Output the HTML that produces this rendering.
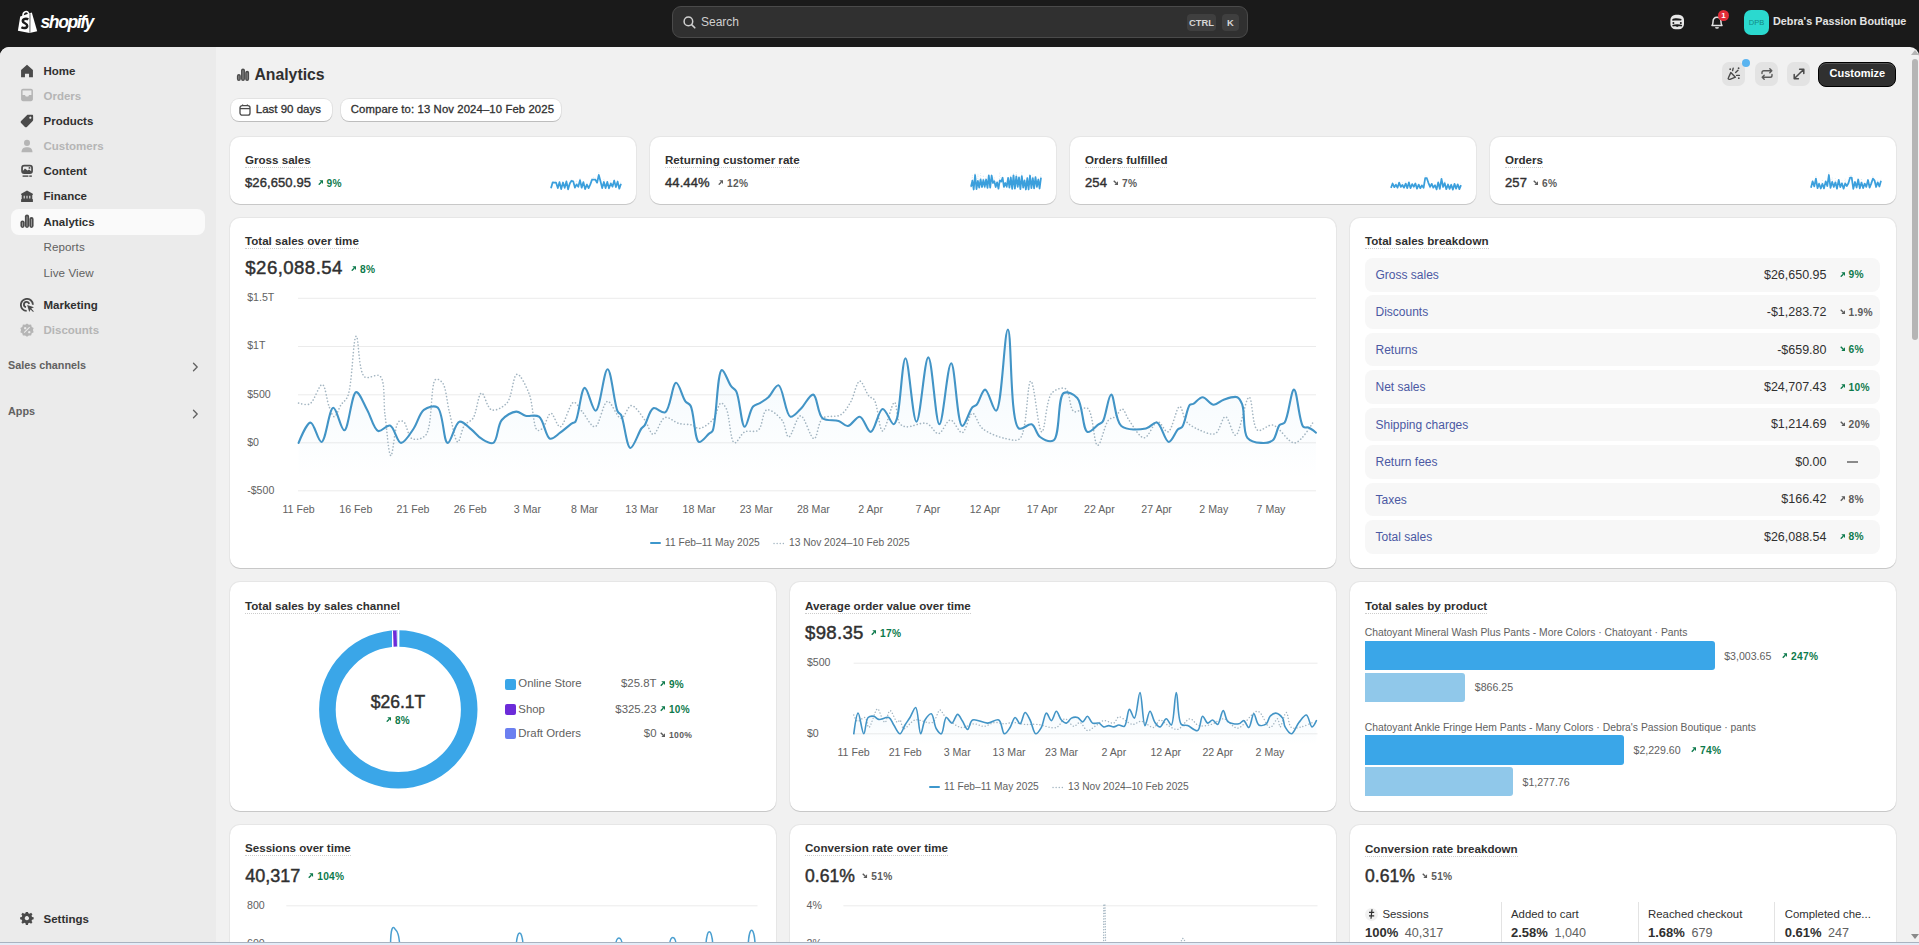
<!DOCTYPE html><html><head><meta charset="utf-8"><style>
html,body{margin:0;padding:0;}
body{width:1919px;height:945px;overflow:hidden;position:relative;background:#1a1a1a;font-family:"Liberation Sans",sans-serif;}
.t{position:absolute;white-space:nowrap;line-height:1.2;}
.abs{position:absolute;}
#top{position:absolute;left:0;top:0;width:1919px;height:47px;background:#1a1a1a;}
#frame{position:absolute;left:0;top:47px;width:1919px;height:898px;background:#f1f1f1;border-radius:9px 9px 0 0;}
#side{position:absolute;left:0;top:47px;width:216px;height:898px;background:#ebebeb;border-radius:9px 0 0 0;}
#search{position:absolute;left:672px;top:6px;width:576px;height:32px;box-sizing:border-box;border:1px solid #4a4a4a;border-radius:9px;background:#303030;}
.kbd{position:absolute;top:7px;height:17px;border-radius:4px;background:#3f3f3f;color:#d6d6d6;font:700 9.4px/17px "Liberation Sans",sans-serif;text-align:center;}
.btn{position:absolute;background:#fff;border-radius:8px;box-shadow:0 1px 0 rgba(0,0,0,0.16),0 0 0 1px rgba(0,0,0,0.06);}
.card{position:absolute;background:#fff;border-radius:10px;box-shadow:0 1px 0 rgba(0,0,0,0.13),0 0 0 1px rgba(0,0,0,0.045);}
.ttl{font-size:11.6px;font-weight:700;color:#303030;border-bottom:1px dotted #cccccc;padding-bottom:0.2px;}
.pct{display:flex;align-items:flex-start;gap:3.6px;font-weight:700;letter-spacing:0.3px;}
.pct svg{display:block;margin-top:2.3px;width:5.4px;height:5.4px;}
</style></head><body><div id="top"></div>
<svg style="position:absolute;left:0;top:0" width="40" height="40" viewBox="0 0 40 40">
<path d="M23 16 C22.6 11.4 27.4 9.6 29 14.4" stroke="#fff" stroke-width="1.5" fill="none"/>
<path d="M20.2 16.4 L31.8 12.6 L37.2 31.2 L29.6 33 L17.9 30.8 Z" fill="#fff"/>
<path d="M30 13.4 L29.9 32.8" stroke="#1a1a1a" stroke-width="0.7"/>
<path d="M28.2 19.6 C26.6 18.4 22.6 18.6 22.8 21.2 C23 23.4 27.4 23.2 27.2 25.8 C27 28.4 23.4 28.4 21.4 27.2" stroke="#1a1a1a" stroke-width="2.5" fill="none"/>
</svg>
<div class="t" style="left:40.5px;top:11.8px;font-size:17.6px;font-weight:700;font-style:italic;color:#fff;letter-spacing:-1.45px">shopify</div>
<div id="search"><svg style="position:absolute;left:10px;top:9px" width="13" height="13" viewBox="0 0 13 13"><circle cx="5.4" cy="5.4" r="4.3" stroke="#d0d0d0" stroke-width="1.5" fill="none"/><path d="M8.6 8.6 L11.8 11.8" stroke="#d0d0d0" stroke-width="1.6" stroke-linecap="round"/></svg><div class="t" style="left:28px;top:8px;font-size:12px;color:#cfcfcf">Search</div><div class="kbd" style="left:514px;width:29px">CTRL</div><div class="kbd" style="left:549px;width:17px">K</div></div>
<svg style="position:absolute;left:1669px;top:14px" width="16" height="16" viewBox="0 0 16 16">
<rect x="1.4" y="0.8" width="13.6" height="14.4" rx="5.2" fill="#e8e8e8"/>
<path d="M3.2 5.4 C5 4.2 8 4 12.6 5 L12.2 6.6 C9 6.2 6 6.4 3.4 6.8 Z" fill="#1a1a1a"/>
<circle cx="4.4" cy="9" r="1" fill="#1a1a1a"/><circle cx="11.8" cy="9" r="1" fill="#1a1a1a"/>
<path d="M3.2 11 C5 10.4 6.4 10.2 8.2 10.2 C10 10.2 11.4 10.4 13.2 11 L12.6 12.6 C11 12.2 10 12.2 9.2 12.4 L8.2 13 L7.2 12.4 C6.4 12.2 5.4 12.2 3.8 12.6 Z" fill="#1a1a1a"/>
</svg>
<svg style="position:absolute;left:1709px;top:14px" width="16" height="16" viewBox="0 0 16 16">
<path d="M3 11.5 C3.8 10.6 4 9.6 4 8 C4 5 5.6 3.2 8 3.2 C10.4 3.2 12 5 12 8 C12 9.6 12.2 10.6 13 11.5 Z" fill="none" stroke="#e3e3e3" stroke-width="1.5" stroke-linejoin="round"/>
<path d="M6.6 13.2 C7 14.2 9 14.2 9.4 13.2" stroke="#e3e3e3" stroke-width="1.5" fill="none"/>
</svg>
<div style="position:absolute;left:1718px;top:10px;width:11px;height:11px;border-radius:50%;background:#e22c38;color:#fff;font:700 8px/11px 'Liberation Sans',sans-serif;text-align:center">1</div>
<div style="position:absolute;left:1744px;top:10px;width:25px;height:25px;border-radius:7px;background:#2bd9cf;color:#128a84;font:400 7.5px/25px 'Liberation Sans',sans-serif;text-align:center">DPB</div>
<div class="t" style="left:1773px;top:15.0px;font-size:10.8px;font-weight:700;color:#e3e3e3;">Debra's Passion Boutique</div>
<div id="frame"></div><div id="side"></div>
<div style="position:absolute;left:0;top:942px;width:1919px;height:1px;background:#a9b3c0"></div><div style="position:absolute;left:0;top:943px;width:1919px;height:2px;background:#e4ecf7"></div>
<div style="position:absolute;left:1912px;top:59px;width:6px;height:281px;border-radius:3px;background:#b5b5b5"></div>
<svg style="position:absolute;left:1911px;top:50px" width="8" height="5"><path d="M0 5 L4 0 L8 5 Z" fill="#b5b5b5"/></svg>
<svg style="position:absolute;left:1911px;top:934px" width="8" height="5"><path d="M0 0 L4 5 L8 0 Z" fill="#8a8a8a"/></svg>
<div style="position:absolute;left:11px;top:209px;width:194px;height:26px;border-radius:8px;background:#fafafa"></div>
<svg style="position:absolute;left:20px;top:64px;color:#4a4a4a" width="14" height="14" viewBox="0 0 13 13" fill="#4a4a4a"><path d="M6.5 0.8 L12 5.6 V12.2 H8.4 V9 H4.6 V12.2 H1 V5.6 Z" /></svg>
<div class="t" style="left:43.5px;top:64.6px;font-size:11.5px;font-weight:700;color:#303030;">Home</div>
<svg style="position:absolute;left:20px;top:88px;color:#b5b5b5" width="14" height="14" viewBox="0 0 13 13" fill="#b5b5b5"><path d="M1 2.6 C1 1.6 1.8 0.8 2.8 0.8 H10.2 C11.2 0.8 12 1.6 12 2.6 V10.4 C12 11.4 11.2 12.2 10.2 12.2 H2.8 C1.8 12.2 1 11.4 1 10.4 Z M2.4 6.6 H4.6 L5.4 8 H7.6 L8.4 6.6 H10.6 V2.4 H2.4 Z" fill-rule="evenodd"/></svg>
<div class="t" style="left:43.5px;top:89.5px;font-size:11.5px;font-weight:700;color:#b5b5b5;">Orders</div>
<svg style="position:absolute;left:20px;top:114px;color:#4a4a4a" width="14" height="14" viewBox="0 0 13 13" fill="#4a4a4a"><path d="M7.4 0.8 H11.2 C11.8 0.8 12.2 1.2 12.2 1.8 V5.6 C12.2 6 12 6.3 11.8 6.6 L6.4 12 C5.9 12.5 5.1 12.5 4.6 12 L1 8.4 C0.5 7.9 0.5 7.1 1 6.6 L6.4 1.2 C6.7 0.9 7 0.8 7.4 0.8 Z M9.6 2.4 A1 1 0 1 0 9.61 2.4 Z" fill-rule="evenodd"/></svg>
<div class="t" style="left:43.5px;top:114.5px;font-size:11.5px;font-weight:700;color:#303030;">Products</div>
<svg style="position:absolute;left:20px;top:139px;color:#b5b5b5" width="14" height="14" viewBox="0 0 13 13" fill="#b5b5b5"><circle cx="6.5" cy="3.6" r="2.8"/><path d="M1.4 12.2 C1.4 8.8 3.6 7.6 6.5 7.6 C9.4 7.6 11.6 8.8 11.6 12.2 Z"/></svg>
<div class="t" style="left:43.5px;top:139.6px;font-size:11.5px;font-weight:700;color:#b5b5b5;">Customers</div>
<svg style="position:absolute;left:20px;top:164px;color:#4a4a4a" width="14" height="14" viewBox="0 0 13 13" fill="#4a4a4a"><rect x="1.9" y="1.5" width="9.3" height="6.9" rx="2" fill="none" stroke="currentColor" stroke-width="1.6"/><path d="M2 7.2 L4.6 4.2 L7 6 L8.4 5.2 L11 7.2 V8.4 H2 Z"/><circle cx="8.8" cy="3.6" r="0.9"/><rect x="2.4" y="10.6" width="5.4" height="1.3"/><rect x="8.6" y="10.6" width="2.4" height="1.3"/></svg>
<div class="t" style="left:43.5px;top:165.0px;font-size:11.5px;font-weight:700;color:#303030;">Content</div>
<svg style="position:absolute;left:20px;top:189px;color:#4a4a4a" width="14" height="14" viewBox="0 0 13 13" fill="#4a4a4a"><path d="M6.5 1.4 L11.9 4.4 V5.6 H1.1 V4.4 Z"/><path d="M1.6 5.4 H11.4 V9.4 H1.6 Z M3.4 6.2 V8.8 H4.4 V6.2 Z M6 6.2 V8.8 H7 V6.2 Z M8.6 6.2 V8.8 H9.6 V6.2 Z" fill-rule="evenodd"/><rect x="1" y="9.2" width="11" height="2.8" rx="0.5"/></svg>
<div class="t" style="left:43.5px;top:190.2px;font-size:11.5px;font-weight:700;color:#303030;">Finance</div>
<svg style="position:absolute;left:20px;top:214px;color:#4a4a4a" width="14" height="14" viewBox="0 0 13 13" fill="#4a4a4a"><rect x="0.4" y="6" width="3.9" height="6.9" rx="1.95"/><rect x="4.55" y="0.4" width="3.9" height="12.5" rx="1.95"/><rect x="8.7" y="2.8" width="3.9" height="10.1" rx="1.95"/><path d="M2.35 8 V11.2 M6.5 2.6 V11.2 M10.65 5 V11.2" stroke="#9a9a9a" stroke-width="0.9" stroke-linecap="round"/></svg>
<div class="t" style="left:43.5px;top:215.5px;font-size:11.5px;font-weight:700;color:#303030;">Analytics</div>
<div class="t" style="left:43.5px;top:240.3px;font-size:11.6px;font-weight:400;color:#616161;letter-spacing:0.1px">Reports</div>
<div class="t" style="left:43.5px;top:265.6px;font-size:11.6px;font-weight:400;color:#616161;letter-spacing:0.1px">Live View</div>
<svg style="position:absolute;left:20px;top:298px;color:#4a4a4a" width="14" height="14" viewBox="0 0 13 13" fill="#4a4a4a"><path d="M12 6.2 A5.6 5.6 0 1 0 6.2 12" fill="none" stroke="currentColor" stroke-width="1.7"/><path d="M8.4 5.6 A2.4 2.4 0 1 0 5.6 8.4" fill="none" stroke="currentColor" stroke-width="1.7"/><path d="M6.6 6.6 L13 8.6 L10.4 9.8 L12.8 12.4 L12.2 13 L9.8 10.6 L8.6 13 Z"/></svg>
<div class="t" style="left:43.5px;top:299.0px;font-size:11.5px;font-weight:700;color:#303030;">Marketing</div>
<svg style="position:absolute;left:20px;top:323px;color:#b5b5b5" width="14" height="14" viewBox="0 0 13 13" fill="#b5b5b5"><path d="M6.5 0.4 L8.2 1.7 L10.3 1.5 L10.9 3.6 L12.7 4.7 L12 6.6 L12.7 8.5 L10.9 9.6 L10.3 11.6 L8.2 11.5 L6.5 12.8 L4.8 11.5 L2.7 11.6 L2.1 9.6 L0.3 8.5 L1 6.6 L0.3 4.7 L2.1 3.6 L2.7 1.5 L4.8 1.7 Z M4.2 9.3 L9.3 4.2 L8.6 3.5 L3.5 8.6 Z M4.8 3.6 A1.1 1.1 0 1 0 4.81 3.6 Z M8.6 7.4 A1.1 1.1 0 1 0 8.61 7.4 Z" fill-rule="evenodd"/></svg>
<div class="t" style="left:43.5px;top:323.7px;font-size:11.5px;font-weight:700;color:#b5b5b5;">Discounts</div>
<div class="t" style="left:8px;top:358.8px;font-size:10.8px;font-weight:700;color:#616161;">Sales channels</div>
<div class="t" style="left:8px;top:405.0px;font-size:10.8px;font-weight:700;color:#616161;">Apps</div>
<svg style="position:absolute;left:192px;top:362px" width="7" height="10" viewBox="0 0 7 10"><path d="M1.5 1.2 L5.2 5 L1.5 8.8" stroke="#616161" stroke-width="1.3" fill="none" stroke-linecap="round" stroke-linejoin="round"/></svg>
<svg style="position:absolute;left:192px;top:409px" width="7" height="10" viewBox="0 0 7 10"><path d="M1.5 1.2 L5.2 5 L1.5 8.8" stroke="#616161" stroke-width="1.3" fill="none" stroke-linecap="round" stroke-linejoin="round"/></svg>
<svg style="position:absolute;left:20px;top:912px;color:#4a4a4a" width="14" height="14" viewBox="0 0 13 13" fill="#4a4a4a"><path d="M5.4 0.6 H7.6 L8 2.4 L9.4 3 L11 2 L12.5 3.6 L11.5 5.1 L12.1 6.5 L13.8 6.9 V9 L12.1 9.4 L11.5 10.8 L12.5 12.3 L11 13.8 L9.4 12.8 L8 13.4 L7.6 15.2 H5.4 L5 13.4 L3.6 12.8 L2 13.8 L0.5 12.3 L1.5 10.8 L0.9 9.4 L-0.8 9 V6.9 L0.9 6.5 L1.5 5.1 L0.5 3.6 L2 2 L3.6 3 L5 2.4 Z M6.5 5.6 A2.3 2.3 0 1 0 6.51 5.6 Z" fill-rule="evenodd" transform="translate(0.8 -1) scale(0.86)"/></svg>
<div class="t" style="left:43.5px;top:912.7px;font-size:11.5px;font-weight:700;color:#303030;">Settings</div>
<svg style="position:absolute;left:236px;top:68px" width="14" height="13" viewBox="0 0 13 13" fill="#4a4a4a"><rect x="0.4" y="6" width="3.9" height="6.9" rx="1.95"/><rect x="4.55" y="0.4" width="3.9" height="12.5" rx="1.95"/><rect x="8.7" y="2.8" width="3.9" height="10.1" rx="1.95"/><path d="M2.35 8 V11.2 M6.5 2.6 V11.2 M10.65 5 V11.2" stroke="#9a9a9a" stroke-width="0.9" stroke-linecap="round"/></svg>
<div class="t" style="left:254.4px;top:66.3px;font-size:15.8px;font-weight:700;color:#303030;">Analytics</div>
<div class="btn" style="left:231px;top:99px;width:101px;height:22px"></div>
<svg style="position:absolute;left:239px;top:103.5px" width="12" height="12" viewBox="0 0 12 12"><rect x="1" y="1.6" width="10" height="9.6" rx="2.2" fill="none" stroke="#4a4a4a" stroke-width="1.3"/><path d="M1 4.6 H11" stroke="#4a4a4a" stroke-width="1.3"/><path d="M3.6 0.4 V2 M8.4 0.4 V2" stroke="#4a4a4a" stroke-width="1.2"/></svg>
<div class="t" style="left:255.8px;top:102.6px;font-size:11.5px;font-weight:400;color:#303030;-webkit-text-stroke:0.3px #303030">Last 90 days</div>
<div class="btn" style="left:341px;top:99px;width:220px;height:22px"></div>
<div class="t" style="left:350.8px;top:102.7px;font-size:11.3px;font-weight:400;color:#303030;letter-spacing:0.12px;-webkit-text-stroke:0.3px #303030">Compare to: 13 Nov 2024–10 Feb 2025</div>
<div style="position:absolute;left:1722px;top:62px;width:23px;height:24px;border-radius:7px;background:#e3e3e3"></div>
<div style="position:absolute;left:1755px;top:62px;width:23px;height:24px;border-radius:7px;background:#e3e3e3"></div>
<div style="position:absolute;left:1787px;top:62px;width:23px;height:24px;border-radius:7px;background:#e3e3e3"></div>
<svg style="position:absolute;left:1727px;top:67px" width="14" height="14" viewBox="0 0 14 14">
<path d="M2.2 12.4 C1.4 12.4 1 11.6 1.3 11 L3.8 5.6 L8.4 10.2 L3 12.4 Z" fill="none" stroke="#4a4a4a" stroke-width="1.4" stroke-linejoin="round"/>
<path d="M5.6 3.6 L6.2 1.2 M8.6 5.4 L11 3.2 M9.6 8.4 L12.4 8.4" stroke="#4a4a4a" stroke-width="1.4" stroke-linecap="round"/>
<circle cx="3.2" cy="2.2" r="0.9" fill="#4a4a4a"/><circle cx="11.6" cy="1.2" r="0.9" fill="#4a4a4a"/><circle cx="11.8" cy="11.2" r="0.9" fill="#4a4a4a"/>
</svg>
<div style="position:absolute;left:1741.5px;top:58.5px;width:8px;height:8px;border-radius:50%;background:#5ab4f0"></div>
<svg style="position:absolute;left:1759.5px;top:67px" width="14" height="14" viewBox="0 0 14 14">
<path d="M2 6.6 V5.6 C2 4.6 2.8 3.8 3.8 3.8 H11.6 M9.8 1.8 L11.8 3.8 L9.8 5.8" fill="none" stroke="#5a5a5a" stroke-width="1.4" stroke-linecap="round" stroke-linejoin="round"/>
<path d="M12 7.4 V8.4 C12 9.4 11.2 10.2 10.2 10.2 H2.4 M4.2 12.2 L2.2 10.2 L4.2 8.2" fill="none" stroke="#5a5a5a" stroke-width="1.4" stroke-linecap="round" stroke-linejoin="round"/>
</svg>
<svg style="position:absolute;left:1791.5px;top:67px" width="14" height="14" viewBox="0 0 14 14">
<path d="M2.2 11.8 L11.8 2.2 M7.6 2.2 H11.8 V6.4 M2.2 7.6 V11.8 H6.4" fill="none" stroke="#4a4a4a" stroke-width="1.5" stroke-linecap="round" stroke-linejoin="round"/>
</svg>
<div style="position:absolute;left:1818px;top:62px;width:78px;height:25px;box-sizing:border-box;border-radius:8px;background:#303030;border:1px solid #000;box-shadow:inset 0 1px 0 rgba(255,255,255,0.18)"></div>
<div class="t" style="left:1829.5px;top:67.2px;font-size:11px;font-weight:700;color:#ffffff;">Customize</div>
<div class="card" style="left:230px;top:137px;width:406px;height:67px"></div>
<div class="t ttl" style="left:245px;top:152.6px">Gross sales</div>
<div class="t" style="left:245px;top:175.4px;font-size:13px;font-weight:400;color:#303030;-webkit-text-stroke:0.4px #303030;letter-spacing:0.1px">$26,650.95</div>
<div class="t pct" style="left:317.5px;top:177.6px;font-size:10.2px;color:#0d7a4c"><svg width="6" height="6" viewBox="0 0 10 10"><path d="M1.4 8.6 L6 4" stroke="currentColor" stroke-width="2.6" fill="none"/><path d="M2.4 0.6 H9.4 V7.6 Z" fill="currentColor"/></svg><span>9%</span></div>
<svg class="abs" style="left:0;top:0" width="1919" height="945"><path d="M551.0,186.7 L552.7,182.6 L554.4,181.2 L556.1,181.2 L557.8,188.2 L559.5,180.6 L561.2,189.0 L563.0,182.6 L564.7,188.1 L566.4,182.5 L568.1,187.2 L569.8,181.6 L571.5,179.0 L573.2,182.2 L574.9,188.8 L576.6,180.1 L578.3,186.4 L580.0,178.2 L581.7,186.8 L583.4,182.1 L585.1,186.9 L586.9,182.4 L588.6,187.6 L590.3,181.6 L592.0,177.6 L593.7,177.6 L595.4,177.6 L597.1,183.1 L598.8,172.0 L600.5,182.5 L602.2,188.8 L603.9,178.9 L605.6,186.3 L607.3,183.5 L609.0,189.5 L610.8,180.5 L612.5,186.3 L614.2,179.2 L615.9,187.2 L617.6,180.0 L619.3,187.9 L621.0,181.2" stroke="#c9d9e6" stroke-width="0.8" stroke-dasharray="0.8 1.6" fill="none" opacity="0.7"/><path d="M551.0,188.3 L552.7,182.3 L554.4,182.6 L556.1,182.7 L557.8,188.1 L559.5,182.2 L561.2,189.1 L563.0,182.5 L564.7,187.8 L566.4,181.4 L568.1,189.3 L569.8,183.4 L571.5,180.8 L573.2,181.3 L574.9,187.6 L576.6,184.5 L578.3,186.7 L580.0,180.1 L581.7,187.7 L583.4,182.1 L585.1,189.1 L586.9,184.6 L588.6,188.1 L590.3,184.4 L592.0,179.7 L593.7,179.7 L595.4,179.7 L597.1,182.7 L598.8,175.0 L600.5,181.2 L602.2,188.1 L603.9,182.0 L605.6,188.1 L607.3,181.9 L609.0,188.3 L610.8,183.5 L612.5,186.7 L614.2,180.6 L615.9,187.1 L617.6,181.7 L619.3,188.7 L621.0,183.7" stroke="#3b9fdc" stroke-width="1.75" fill="none" stroke-linejoin="round"/></svg>
<div class="card" style="left:650px;top:137px;width:406px;height:67px"></div>
<div class="t ttl" style="left:665px;top:152.6px">Returning customer rate</div>
<div class="t" style="left:665px;top:175.4px;font-size:13px;font-weight:400;color:#303030;-webkit-text-stroke:0.4px #303030;letter-spacing:0.1px">44.44%</div>
<div class="t pct" style="left:718px;top:177.6px;font-size:10.2px;color:#5c5c5c"><svg width="6" height="6" viewBox="0 0 10 10"><path d="M1.4 8.6 L6 4" stroke="currentColor" stroke-width="2.6" fill="none"/><path d="M2.4 0.6 H9.4 V7.6 Z" fill="currentColor"/></svg><span>12%</span></div>
<svg class="abs" style="left:0;top:0" width="1919" height="945"><path d="M971.0,187.8 L972.4,175.2 L973.7,188.5 L975.1,172.6 L976.5,187.0 L977.9,173.9 L979.2,188.0 L980.6,173.3 L982.0,187.0 L983.4,175.2 L984.7,189.2 L986.1,176.4 L987.5,186.2 L988.8,175.5 L990.2,188.3 L991.6,174.9 L993.0,181.7 L994.3,177.3 L995.7,186.9 L997.1,180.8 L998.5,188.2 L999.8,172.2 L1001.2,179.9 L1002.6,176.3 L1003.9,189.3 L1005.3,181.7 L1006.7,187.9 L1008.1,177.7 L1009.4,186.3 L1010.8,175.0 L1012.2,187.7 L1013.5,173.1 L1014.9,188.2 L1016.3,172.2 L1017.7,187.2 L1019.0,176.9 L1020.4,188.0 L1021.8,172.3 L1023.2,187.5 L1024.5,179.8 L1025.9,186.6 L1027.3,176.6 L1028.6,188.5 L1030.0,176.1 L1031.4,188.9 L1032.8,174.6 L1034.1,187.4 L1035.5,176.3 L1036.9,187.9 L1038.3,177.3 L1039.6,187.2 L1041.0,173.3" stroke="#c9d9e6" stroke-width="0.8" stroke-dasharray="0.8 1.6" fill="none" opacity="0.7"/><path d="M971.0,186.8 L972.4,180.6 L973.7,189.5 L975.1,175.0 L976.5,189.1 L977.9,180.8 L979.2,187.7 L980.6,179.3 L982.0,187.0 L983.4,180.0 L984.7,186.8 L986.1,179.5 L987.5,187.8 L988.8,175.4 L990.2,187.6 L991.6,175.5 L993.0,183.0 L994.3,181.3 L995.7,187.0 L997.1,182.3 L998.5,188.7 L999.8,180.3 L1001.2,181.6 L1002.6,177.7 L1003.9,186.9 L1005.3,183.0 L1006.7,186.8 L1008.1,177.8 L1009.4,187.6 L1010.8,177.5 L1012.2,188.8 L1013.5,175.3 L1014.9,188.7 L1016.3,176.4 L1017.7,186.8 L1019.0,177.3 L1020.4,189.2 L1021.8,176.1 L1023.2,187.7 L1024.5,180.4 L1025.9,189.5 L1027.3,178.1 L1028.6,189.5 L1030.0,175.5 L1031.4,188.1 L1032.8,178.2 L1034.1,188.4 L1035.5,177.2 L1036.9,186.9 L1038.3,179.6 L1039.6,188.5 L1041.0,177.7" stroke="#3b9fdc" stroke-width="1.75" fill="none" stroke-linejoin="round"/></svg>
<div class="card" style="left:1070px;top:137px;width:406px;height:67px"></div>
<div class="t ttl" style="left:1085px;top:152.6px">Orders fulfilled</div>
<div class="t" style="left:1085px;top:175.4px;font-size:13px;font-weight:400;color:#303030;-webkit-text-stroke:0.4px #303030;letter-spacing:0.1px">254</div>
<div class="t pct" style="left:1113px;top:177.6px;font-size:10.2px;color:#5c5c5c"><svg width="6" height="6" viewBox="0 0 10 10"><path d="M1.4 1.4 L6 6" stroke="currentColor" stroke-width="2.6" fill="none"/><path d="M9.4 2.4 V9.4 H2.4 Z" fill="currentColor"/></svg><span>7%</span></div>
<svg class="abs" style="left:0;top:0" width="1919" height="945"><path d="M1391.0,187.9 L1392.6,182.8 L1394.3,186.9 L1395.9,181.6 L1397.5,188.4 L1399.1,182.6 L1400.8,187.4 L1402.4,182.0 L1404.0,186.3 L1405.7,181.8 L1407.3,186.5 L1408.9,182.1 L1410.5,188.7 L1412.2,183.6 L1413.8,189.6 L1415.4,182.8 L1417.0,189.0 L1418.7,183.6 L1420.3,189.1 L1421.9,184.7 L1423.6,186.9 L1425.2,175.9 L1426.8,175.9 L1428.4,181.2 L1430.1,188.6 L1431.7,182.5 L1433.3,189.1 L1435.0,184.3 L1436.6,187.1 L1438.2,184.4 L1439.8,186.1 L1441.5,176.6 L1443.1,186.5 L1444.7,180.9 L1446.3,189.3 L1448.0,183.2 L1449.6,187.9 L1451.2,183.8 L1452.9,188.7 L1454.5,183.2 L1456.1,187.9 L1457.7,183.7 L1459.4,187.5 L1461.0,182.6" stroke="#c9d9e6" stroke-width="0.8" stroke-dasharray="0.8 1.6" fill="none" opacity="0.7"/><path d="M1391.0,187.9 L1392.6,183.5 L1394.3,187.2 L1395.9,184.7 L1397.5,187.7 L1399.1,182.7 L1400.8,186.9 L1402.4,185.0 L1404.0,187.7 L1405.7,183.6 L1407.3,188.1 L1408.9,182.4 L1410.5,188.1 L1412.2,184.1 L1413.8,186.8 L1415.4,183.5 L1417.0,188.7 L1418.7,184.6 L1420.3,188.2 L1421.9,185.4 L1423.6,187.8 L1425.2,178.2 L1426.8,178.2 L1428.4,182.8 L1430.1,186.9 L1431.7,183.8 L1433.3,187.6 L1435.0,185.2 L1436.6,189.4 L1438.2,182.4 L1439.8,188.8 L1441.5,178.8 L1443.1,187.0 L1444.7,183.1 L1446.3,189.2 L1448.0,184.5 L1449.6,188.9 L1451.2,184.7 L1452.9,189.6 L1454.5,183.9 L1456.1,188.7 L1457.7,184.3 L1459.4,189.1 L1461.0,185.2" stroke="#3b9fdc" stroke-width="1.75" fill="none" stroke-linejoin="round"/></svg>
<div class="card" style="left:1490px;top:137px;width:406px;height:67px"></div>
<div class="t ttl" style="left:1505px;top:152.6px">Orders</div>
<div class="t" style="left:1505px;top:175.4px;font-size:13px;font-weight:400;color:#303030;-webkit-text-stroke:0.4px #303030;letter-spacing:0.1px">257</div>
<div class="t pct" style="left:1533px;top:177.6px;font-size:10.2px;color:#5c5c5c"><svg width="6" height="6" viewBox="0 0 10 10"><path d="M1.4 1.4 L6 6" stroke="currentColor" stroke-width="2.6" fill="none"/><path d="M9.4 2.4 V9.4 H2.4 Z" fill="currentColor"/></svg><span>6%</span></div>
<svg class="abs" style="left:0;top:0" width="1919" height="945"><path d="M1811.0,187.1 L1812.6,180.0 L1814.3,185.4 L1815.9,176.4 L1817.5,185.9 L1819.1,182.1 L1820.8,187.3 L1822.4,179.3 L1824.0,187.1 L1825.7,181.9 L1827.3,187.2 L1828.9,172.0 L1830.5,185.5 L1832.2,177.5 L1833.8,187.8 L1835.4,178.4 L1837.0,187.8 L1838.7,180.4 L1840.3,188.4 L1841.9,180.7 L1843.6,186.5 L1845.2,178.6 L1846.8,186.6 L1848.4,178.2 L1850.1,175.2 L1851.7,175.2 L1853.3,188.0 L1855.0,181.6 L1856.6,187.3 L1858.2,178.0 L1859.8,187.8 L1861.5,178.4 L1863.1,187.3 L1864.7,182.3 L1866.3,187.8 L1868.0,179.6 L1869.6,187.9 L1871.2,181.4 L1872.9,176.4 L1874.5,179.8 L1876.1,187.6 L1877.7,180.3 L1879.4,188.0 L1881.0,178.9" stroke="#c9d9e6" stroke-width="0.8" stroke-dasharray="0.8 1.6" fill="none" opacity="0.7"/><path d="M1811.0,187.7 L1812.6,181.3 L1814.3,186.4 L1815.9,178.7 L1817.5,188.2 L1819.1,183.7 L1820.8,188.5 L1822.4,183.8 L1824.0,188.4 L1825.7,181.4 L1827.3,186.0 L1828.9,175.0 L1830.5,187.8 L1832.2,181.9 L1833.8,186.9 L1835.4,182.3 L1837.0,188.7 L1838.7,179.8 L1840.3,187.1 L1841.9,183.3 L1843.6,188.7 L1845.2,183.4 L1846.8,186.1 L1848.4,183.3 L1850.1,177.6 L1851.7,177.6 L1853.3,188.8 L1855.0,182.0 L1856.6,187.5 L1858.2,179.5 L1859.8,188.3 L1861.5,182.6 L1863.1,188.1 L1864.7,183.6 L1866.3,186.9 L1868.0,180.0 L1869.6,187.6 L1871.2,183.6 L1872.9,178.7 L1874.5,180.3 L1876.1,187.0 L1877.7,182.3 L1879.4,186.4 L1881.0,180.8" stroke="#3b9fdc" stroke-width="1.75" fill="none" stroke-linejoin="round"/></svg>
<div class="card" style="left:230px;top:218px;width:1106px;height:350px"></div>
<div class="t ttl" style="left:245px;top:233.6px">Total sales over time</div>
<div class="t" style="left:245.3px;top:257.3px;font-size:18.6px;font-weight:400;color:#303030;letter-spacing:0.45px;-webkit-text-stroke:0.45px #303030">$26,088.54</div>
<div class="t pct" style="left:351px;top:263.6px;font-size:10.2px;color:#0d7a4c"><svg width="6" height="6" viewBox="0 0 10 10"><path d="M1.4 8.6 L6 4" stroke="currentColor" stroke-width="2.6" fill="none"/><path d="M2.4 0.6 H9.4 V7.6 Z" fill="currentColor"/></svg><span>8%</span></div>
<svg class="abs" style="left:0;top:0" width="1919" height="945"><defs><linearGradient id="gf" x1="0" y1="0" x2="0" y2="1"><stop offset="0" stop-color="#3b9fdc" stop-opacity="0.07"/><stop offset="1" stop-color="#3b9fdc" stop-opacity="0.0"/></linearGradient><linearGradient id="gf2" x1="0" y1="0" x2="0" y2="1"><stop offset="0" stop-color="#3b9fdc" stop-opacity="0.08"/><stop offset="1" stop-color="#3b9fdc" stop-opacity="0.0"/></linearGradient></defs><line x1="298" x2="1316" y1="298.3" y2="298.3" stroke="#ebebeb" stroke-width="1"/><line x1="298" x2="1316" y1="346.5" y2="346.5" stroke="#ebebeb" stroke-width="1"/><line x1="298" x2="1316" y1="394.8" y2="394.8" stroke="#ebebeb" stroke-width="1"/><line x1="298" x2="1316" y1="442.8" y2="442.8" stroke="#ebebeb" stroke-width="1"/><line x1="298" x2="1316" y1="490.8" y2="490.8" stroke="#ebebeb" stroke-width="1"/><path d="M298.6,442.9 C298.6,442.9 306.6,422.6 310.5,422.6 C314.3,422.6 318.1,442.3 321.5,442.0 C325.8,441.6 329.1,408.1 333.3,407.8 C336.8,407.6 340.9,430.5 344.3,430.2 C348.6,429.9 351.6,392.7 356.2,392.1 C359.5,391.7 363.6,403.6 367.2,409.9 C371.0,416.6 373.6,429.4 378.2,431.0 C381.6,432.2 386.5,424.5 390.0,425.5 C394.4,426.8 397.0,442.6 401.0,442.9 C404.9,443.2 410.0,433.8 413.7,428.5 C417.6,422.9 419.3,413.3 423.9,409.9 C427.6,407.2 433.8,405.1 437.4,407.3 C443.3,410.9 443.4,442.4 447.6,442.9 C451.0,443.3 454.8,422.9 459.4,421.7 C463.0,420.8 467.6,426.5 471.3,429.4 C475.0,432.2 477.7,436.4 481.5,438.7 C485.1,440.9 490.2,444.4 493.3,442.9 C497.7,440.9 497.3,425.3 501.8,420.0 C505.5,415.6 511.9,411.8 516.2,411.6 C519.6,411.4 522.0,414.9 525.5,415.8 C529.5,416.8 535.3,414.2 539.0,416.7 C544.0,420.1 545.6,437.4 550.0,438.7 C553.0,439.6 556.8,435.1 560.2,432.7 C564.1,430.0 569.2,425.2 572.0,423.4 C573.4,422.5 574.3,423.0 575.4,421.7 C578.8,417.6 580.9,388.2 584.7,387.9 C587.9,387.6 592.3,411.0 595.7,410.7 C600.1,410.3 603.9,369.2 607.6,369.3 C611.3,369.4 614.3,405.5 617.7,411.6 C618.8,413.6 620.0,413.1 621.1,415.0 C624.1,420.2 626.5,447.5 630.4,448.0 C633.5,448.4 638.6,432.2 641.4,428.5 C642.7,426.8 643.6,426.8 644.8,425.1 C647.2,421.7 649.4,409.8 653.3,408.2 C656.5,406.9 661.8,413.9 665.1,412.4 C670.3,410.0 672.3,383.0 676.1,382.8 C679.1,382.6 682.4,397.6 685.4,401.4 C687.1,403.6 689.0,403.1 690.5,405.6 C694.2,411.5 694.4,440.4 699.0,442.0 C701.7,442.9 706.6,435.6 709.1,433.6 C710.5,432.5 711.4,432.8 712.5,431.0 C716.5,424.2 717.1,371.0 721.8,370.1 C724.4,369.6 728.2,382.5 731.1,386.2 C732.9,388.5 734.6,388.5 736.2,391.3 C739.7,397.6 741.4,426.5 744.7,426.8 C747.2,427.0 749.6,410.2 753.1,406.5 C755.1,404.3 757.6,404.5 759.9,403.1 C762.6,401.5 765.6,399.7 768.4,397.2 C771.8,394.1 775.4,384.8 778.5,385.3 C783.0,386.1 785.5,415.3 790.4,416.7 C793.4,417.6 797.2,412.2 800.6,409.0 C804.8,405.1 809.7,394.0 813.2,394.6 C817.3,395.3 817.5,414.2 822.6,418.3 C826.7,421.6 834.1,419.4 838.6,420.9 C842.2,422.2 844.7,426.3 847.9,426.0 C851.7,425.7 856.2,416.2 859.8,416.7 C863.9,417.3 867.3,432.2 870.8,431.9 C874.9,431.6 878.5,409.3 882.6,409.0 C886.1,408.7 891.1,424.4 893.6,424.3 C895.1,424.2 895.9,421.5 897.0,418.3 C900.2,408.8 902.3,358.2 905.5,358.2 C908.8,358.1 912.7,421.7 916.5,421.7 C920.3,421.7 924.5,357.4 928.3,357.4 C932.2,357.4 935.5,424.2 939.4,424.3 C943.1,424.3 947.4,363.3 951.2,363.3 C955.0,363.3 957.1,425.2 962.2,426.0 C965.1,426.5 969.3,410.5 972.4,407.3 C973.9,405.8 975.2,406.3 976.6,404.8 C979.3,402.0 982.1,389.6 985.1,389.6 C988.6,389.7 993.0,411.2 996.1,410.7 C1001.9,409.7 1004.3,329.4 1007.9,329.5 C1011.9,329.6 1009.5,422.4 1018.9,428.5 C1022.4,430.7 1028.1,423.1 1031.6,424.3 C1035.3,425.6 1036.3,434.3 1040.1,437.0 C1043.7,439.6 1050.0,442.6 1053.6,440.4 C1060.3,436.3 1057.3,396.6 1063.8,393.0 C1067.4,391.0 1073.7,394.2 1077.3,398.0 C1082.9,404.0 1082.5,430.2 1087.5,431.9 C1090.6,433.0 1095.7,426.1 1098.5,424.3 C1100.2,423.2 1101.4,423.4 1102.7,421.7 C1105.9,417.6 1108.2,394.6 1111.2,394.6 C1114.4,394.6 1114.7,420.6 1121.3,426.0 C1127.0,430.7 1139.5,429.8 1145.9,428.5 C1150.5,427.6 1153.6,421.7 1156.9,422.6 C1161.4,423.8 1164.9,441.8 1168.7,442.0 C1171.9,442.1 1175.3,431.8 1178.0,429.3 C1179.5,427.9 1180.9,428.4 1182.2,426.8 C1185.1,423.2 1187.1,407.4 1189.9,404.8 C1191.0,403.8 1191.9,404.5 1193.2,403.9 C1195.6,402.8 1199.3,397.2 1202.6,397.2 C1206.1,397.2 1209.9,404.5 1213.6,404.8 C1217.0,405.0 1220.0,401.0 1223.7,399.7 C1227.8,398.3 1234.1,395.8 1237.3,397.2 C1239.9,398.3 1240.9,401.2 1242.3,404.8 C1245.0,411.8 1242.6,431.9 1247.4,437.8 C1250.6,441.7 1256.6,442.6 1261.0,442.9 C1265.0,443.2 1269.8,442.8 1272.8,440.3 C1276.3,437.4 1276.9,427.9 1279.6,425.1 C1281.1,423.5 1283.0,424.5 1284.6,422.6 C1288.4,418.0 1291.0,389.6 1294.0,389.6 C1297.2,389.7 1299.1,422.9 1303.3,426.8 C1304.8,428.2 1306.6,426.9 1308.4,427.6 C1310.8,428.5 1316.0,432.7 1316.0,432.7 L1316,480 L298.6,480 Z" fill="url(#gf)"/><path d="M298.6,403.1 C298.6,403.1 306.2,405.6 309.6,404.0 C314.5,401.6 319.0,384.0 322.3,384.5 C325.5,385.0 326.7,400.6 329.1,406.5 C330.8,410.6 332.3,416.6 334.2,416.7 C336.3,416.8 338.6,408.4 341.0,404.8 C343.1,401.6 345.8,400.8 347.7,396.3 C352.3,385.6 353.1,336.3 356.2,336.2 C358.8,336.1 358.3,372.1 364.6,376.9 C368.4,379.8 376.4,373.1 379.9,376.0 C385.6,380.7 383.2,401.9 385.0,415.0 C386.9,428.4 388.5,455.5 390.9,455.6 C393.1,455.7 394.6,424.8 398.5,421.7 C400.0,420.5 402.0,420.7 403.6,421.7 C406.7,423.6 407.9,436.8 412.0,438.7 C415.6,440.3 422.0,439.1 425.6,435.3 C432.8,427.6 430.3,382.1 435.7,379.4 C437.7,378.4 440.6,380.4 442.5,382.8 C446.2,387.5 446.8,401.9 449.3,411.6 C451.9,421.6 454.9,441.8 457.8,442.0 C460.0,442.1 461.5,429.2 464.5,425.1 C466.9,421.9 470.6,421.8 473.0,418.3 C476.8,412.8 478.1,393.4 481.5,393.0 C484.4,392.7 487.1,408.5 491.6,409.9 C495.7,411.2 502.9,407.4 506.9,403.1 C512.3,397.3 512.9,374.8 517.0,374.3 C520.5,373.9 525.7,385.4 528.9,393.0 C533.1,403.0 533.2,427.9 537.3,430.2 C538.8,431.1 540.7,429.9 542.4,428.5 C545.4,426.0 547.9,413.4 550.9,413.3 C553.8,413.2 557.0,427.0 560.2,426.8 C564.4,426.6 569.4,402.8 573.7,402.3 C576.6,402.0 579.1,408.1 582.2,411.6 C586.1,416.0 591.0,427.3 594.9,426.8 C599.6,426.3 602.9,401.9 607.6,401.4 C611.7,401.0 616.9,418.3 621.1,418.3 C624.7,418.3 627.6,405.7 631.3,405.6 C635.4,405.4 641.0,415.0 644.8,420.0 C648.3,424.6 650.1,434.3 653.3,434.4 C656.8,434.5 660.4,418.8 665.1,417.5 C669.1,416.4 674.1,422.1 678.7,423.4 C683.1,424.6 688.5,424.0 692.2,425.1 C694.9,425.9 696.4,428.6 699.0,428.5 C702.8,428.3 708.9,424.0 712.5,420.0 C716.4,415.7 718.2,403.5 721.0,403.1 C722.7,402.8 724.5,405.4 726.1,408.2 C729.6,414.4 730.2,441.8 734.5,442.9 C737.3,443.6 740.6,434.0 744.7,431.9 C748.6,429.9 754.7,432.9 758.2,430.2 C762.7,426.8 762.4,411.2 766.7,409.9 C770.6,408.7 778.2,415.5 781.9,420.0 C785.6,424.5 785.9,436.8 788.7,437.0 C791.9,437.2 796.5,415.8 800.6,415.8 C804.9,415.8 810.3,439.0 814.1,438.7 C817.5,438.5 817.8,422.2 822.6,418.3 C826.9,414.8 835.6,417.8 840.3,415.0 C844.8,412.3 847.5,407.3 850.5,402.3 C854.1,396.3 856.5,381.3 859.8,381.1 C862.7,380.9 866.1,393.2 869.1,396.3 C870.8,398.1 872.6,397.5 874.2,399.7 C877.8,404.7 879.2,430.8 882.6,431.0 C886.0,431.2 891.6,402.1 894.5,402.3 C896.9,402.5 896.6,419.6 899.6,423.4 C901.4,425.6 903.4,426.4 906.3,426.8 C911.2,427.5 921.0,421.8 926.6,423.4 C931.5,424.8 934.7,433.9 938.5,433.6 C942.6,433.3 946.4,420.1 950.4,420.0 C954.3,419.9 958.7,433.2 962.2,432.7 C966.1,432.2 968.8,413.5 972.4,413.3 C975.6,413.1 977.6,424.4 982.5,428.5 C988.3,433.3 999.3,437.3 1006.2,438.7 C1011.2,439.7 1016.2,441.7 1019.8,438.7 C1027.3,432.5 1027.0,381.1 1030.8,381.1 C1034.4,381.1 1038.0,431.8 1041.8,431.9 C1045.1,432.0 1045.9,399.3 1051.9,393.0 C1055.5,389.2 1062.0,387.0 1065.5,388.7 C1070.1,390.9 1069.4,409.2 1074.0,411.6 C1077.5,413.4 1083.9,406.1 1087.5,408.2 C1093.4,411.7 1093.7,445.1 1097.6,445.4 C1100.9,445.6 1104.5,424.3 1108.6,420.0 C1110.7,417.7 1113.3,418.2 1115.4,416.6 C1117.9,414.7 1120.1,408.8 1122.2,409.0 C1124.6,409.2 1126.0,416.0 1128.9,420.0 C1132.8,425.4 1139.3,437.8 1144.2,437.8 C1148.9,437.8 1153.4,421.9 1157.7,421.7 C1161.2,421.5 1164.7,432.5 1167.9,431.9 C1172.3,431.1 1176.3,406.5 1179.7,406.5 C1182.3,406.5 1183.1,417.7 1186.5,421.7 C1189.9,425.6 1195.2,428.2 1200.0,430.2 C1204.8,432.2 1211.2,435.4 1215.3,433.6 C1219.9,431.6 1222.1,416.5 1225.4,416.6 C1228.8,416.7 1232.3,435.6 1235.6,435.3 C1240.2,434.9 1245.3,397.0 1249.1,397.2 C1252.6,397.4 1252.1,427.2 1257.6,430.2 C1261.4,432.3 1267.5,424.2 1272.8,425.1 C1279.8,426.4 1288.0,443.5 1294.8,442.9 C1301.6,442.3 1313.4,421.7 1313.4,421.7" stroke="#a3b5c1" stroke-width="1.6" stroke-dasharray="0.1 3.2" stroke-linecap="round" fill="none"/><path d="M298.6,442.9 C298.6,442.9 306.6,422.6 310.5,422.6 C314.3,422.6 318.1,442.3 321.5,442.0 C325.8,441.6 329.1,408.1 333.3,407.8 C336.8,407.6 340.9,430.5 344.3,430.2 C348.6,429.9 351.6,392.7 356.2,392.1 C359.5,391.7 363.6,403.6 367.2,409.9 C371.0,416.6 373.6,429.4 378.2,431.0 C381.6,432.2 386.5,424.5 390.0,425.5 C394.4,426.8 397.0,442.6 401.0,442.9 C404.9,443.2 410.0,433.8 413.7,428.5 C417.6,422.9 419.3,413.3 423.9,409.9 C427.6,407.2 433.8,405.1 437.4,407.3 C443.3,410.9 443.4,442.4 447.6,442.9 C451.0,443.3 454.8,422.9 459.4,421.7 C463.0,420.8 467.6,426.5 471.3,429.4 C475.0,432.2 477.7,436.4 481.5,438.7 C485.1,440.9 490.2,444.4 493.3,442.9 C497.7,440.9 497.3,425.3 501.8,420.0 C505.5,415.6 511.9,411.8 516.2,411.6 C519.6,411.4 522.0,414.9 525.5,415.8 C529.5,416.8 535.3,414.2 539.0,416.7 C544.0,420.1 545.6,437.4 550.0,438.7 C553.0,439.6 556.8,435.1 560.2,432.7 C564.1,430.0 569.2,425.2 572.0,423.4 C573.4,422.5 574.3,423.0 575.4,421.7 C578.8,417.6 580.9,388.2 584.7,387.9 C587.9,387.6 592.3,411.0 595.7,410.7 C600.1,410.3 603.9,369.2 607.6,369.3 C611.3,369.4 614.3,405.5 617.7,411.6 C618.8,413.6 620.0,413.1 621.1,415.0 C624.1,420.2 626.5,447.5 630.4,448.0 C633.5,448.4 638.6,432.2 641.4,428.5 C642.7,426.8 643.6,426.8 644.8,425.1 C647.2,421.7 649.4,409.8 653.3,408.2 C656.5,406.9 661.8,413.9 665.1,412.4 C670.3,410.0 672.3,383.0 676.1,382.8 C679.1,382.6 682.4,397.6 685.4,401.4 C687.1,403.6 689.0,403.1 690.5,405.6 C694.2,411.5 694.4,440.4 699.0,442.0 C701.7,442.9 706.6,435.6 709.1,433.6 C710.5,432.5 711.4,432.8 712.5,431.0 C716.5,424.2 717.1,371.0 721.8,370.1 C724.4,369.6 728.2,382.5 731.1,386.2 C732.9,388.5 734.6,388.5 736.2,391.3 C739.7,397.6 741.4,426.5 744.7,426.8 C747.2,427.0 749.6,410.2 753.1,406.5 C755.1,404.3 757.6,404.5 759.9,403.1 C762.6,401.5 765.6,399.7 768.4,397.2 C771.8,394.1 775.4,384.8 778.5,385.3 C783.0,386.1 785.5,415.3 790.4,416.7 C793.4,417.6 797.2,412.2 800.6,409.0 C804.8,405.1 809.7,394.0 813.2,394.6 C817.3,395.3 817.5,414.2 822.6,418.3 C826.7,421.6 834.1,419.4 838.6,420.9 C842.2,422.2 844.7,426.3 847.9,426.0 C851.7,425.7 856.2,416.2 859.8,416.7 C863.9,417.3 867.3,432.2 870.8,431.9 C874.9,431.6 878.5,409.3 882.6,409.0 C886.1,408.7 891.1,424.4 893.6,424.3 C895.1,424.2 895.9,421.5 897.0,418.3 C900.2,408.8 902.3,358.2 905.5,358.2 C908.8,358.1 912.7,421.7 916.5,421.7 C920.3,421.7 924.5,357.4 928.3,357.4 C932.2,357.4 935.5,424.2 939.4,424.3 C943.1,424.3 947.4,363.3 951.2,363.3 C955.0,363.3 957.1,425.2 962.2,426.0 C965.1,426.5 969.3,410.5 972.4,407.3 C973.9,405.8 975.2,406.3 976.6,404.8 C979.3,402.0 982.1,389.6 985.1,389.6 C988.6,389.7 993.0,411.2 996.1,410.7 C1001.9,409.7 1004.3,329.4 1007.9,329.5 C1011.9,329.6 1009.5,422.4 1018.9,428.5 C1022.4,430.7 1028.1,423.1 1031.6,424.3 C1035.3,425.6 1036.3,434.3 1040.1,437.0 C1043.7,439.6 1050.0,442.6 1053.6,440.4 C1060.3,436.3 1057.3,396.6 1063.8,393.0 C1067.4,391.0 1073.7,394.2 1077.3,398.0 C1082.9,404.0 1082.5,430.2 1087.5,431.9 C1090.6,433.0 1095.7,426.1 1098.5,424.3 C1100.2,423.2 1101.4,423.4 1102.7,421.7 C1105.9,417.6 1108.2,394.6 1111.2,394.6 C1114.4,394.6 1114.7,420.6 1121.3,426.0 C1127.0,430.7 1139.5,429.8 1145.9,428.5 C1150.5,427.6 1153.6,421.7 1156.9,422.6 C1161.4,423.8 1164.9,441.8 1168.7,442.0 C1171.9,442.1 1175.3,431.8 1178.0,429.3 C1179.5,427.9 1180.9,428.4 1182.2,426.8 C1185.1,423.2 1187.1,407.4 1189.9,404.8 C1191.0,403.8 1191.9,404.5 1193.2,403.9 C1195.6,402.8 1199.3,397.2 1202.6,397.2 C1206.1,397.2 1209.9,404.5 1213.6,404.8 C1217.0,405.0 1220.0,401.0 1223.7,399.7 C1227.8,398.3 1234.1,395.8 1237.3,397.2 C1239.9,398.3 1240.9,401.2 1242.3,404.8 C1245.0,411.8 1242.6,431.9 1247.4,437.8 C1250.6,441.7 1256.6,442.6 1261.0,442.9 C1265.0,443.2 1269.8,442.8 1272.8,440.3 C1276.3,437.4 1276.9,427.9 1279.6,425.1 C1281.1,423.5 1283.0,424.5 1284.6,422.6 C1288.4,418.0 1291.0,389.6 1294.0,389.6 C1297.2,389.7 1299.1,422.9 1303.3,426.8 C1304.8,428.2 1306.6,426.9 1308.4,427.6 C1310.8,428.5 1316.0,432.7 1316.0,432.7" stroke="#4294c6" stroke-width="2.1" fill="none" stroke-linecap="round"/></svg>
<div class="t" style="left:247.2px;top:291.0px;font-size:10.6px;font-weight:400;color:#616161;">$1.5T</div>
<div class="t" style="left:247.2px;top:339.2px;font-size:10.6px;font-weight:400;color:#616161;">$1T</div>
<div class="t" style="left:247.2px;top:387.6px;font-size:10.6px;font-weight:400;color:#616161;">$500</div>
<div class="t" style="left:247.2px;top:435.6px;font-size:10.6px;font-weight:400;color:#616161;">$0</div>
<div class="t" style="left:247.2px;top:483.6px;font-size:10.6px;font-weight:400;color:#616161;">-$500</div>
<div class="t" style="left:258.6px;width:80px;text-align:center;top:503.1px;font-size:10.6px;color:#616161">11 Feb</div>
<div class="t" style="left:315.8px;width:80px;text-align:center;top:503.1px;font-size:10.6px;color:#616161">16 Feb</div>
<div class="t" style="left:373.0px;width:80px;text-align:center;top:503.1px;font-size:10.6px;color:#616161">21 Feb</div>
<div class="t" style="left:430.2px;width:80px;text-align:center;top:503.1px;font-size:10.6px;color:#616161">26 Feb</div>
<div class="t" style="left:487.4px;width:80px;text-align:center;top:503.1px;font-size:10.6px;color:#616161">3 Mar</div>
<div class="t" style="left:544.6px;width:80px;text-align:center;top:503.1px;font-size:10.6px;color:#616161">8 Mar</div>
<div class="t" style="left:601.8px;width:80px;text-align:center;top:503.1px;font-size:10.6px;color:#616161">13 Mar</div>
<div class="t" style="left:659.0px;width:80px;text-align:center;top:503.1px;font-size:10.6px;color:#616161">18 Mar</div>
<div class="t" style="left:716.2px;width:80px;text-align:center;top:503.1px;font-size:10.6px;color:#616161">23 Mar</div>
<div class="t" style="left:773.4px;width:80px;text-align:center;top:503.1px;font-size:10.6px;color:#616161">28 Mar</div>
<div class="t" style="left:830.6px;width:80px;text-align:center;top:503.1px;font-size:10.6px;color:#616161">2 Apr</div>
<div class="t" style="left:887.8px;width:80px;text-align:center;top:503.1px;font-size:10.6px;color:#616161">7 Apr</div>
<div class="t" style="left:945.0px;width:80px;text-align:center;top:503.1px;font-size:10.6px;color:#616161">12 Apr</div>
<div class="t" style="left:1002.2px;width:80px;text-align:center;top:503.1px;font-size:10.6px;color:#616161">17 Apr</div>
<div class="t" style="left:1059.4px;width:80px;text-align:center;top:503.1px;font-size:10.6px;color:#616161">22 Apr</div>
<div class="t" style="left:1116.6px;width:80px;text-align:center;top:503.1px;font-size:10.6px;color:#616161">27 Apr</div>
<div class="t" style="left:1173.8px;width:80px;text-align:center;top:503.1px;font-size:10.6px;color:#616161">2 May</div>
<div class="t" style="left:1231.0px;width:80px;text-align:center;top:503.1px;font-size:10.6px;color:#616161">7 May</div>
<div style="position:absolute;left:650px;top:542.3px;width:11px;height:2px;border-radius:1px;background:#3d97cc"></div>
<div class="t" style="left:665px;top:537.2px;font-size:10.2px;font-weight:400;color:#616161;">11 Feb–11 May 2025</div>
<svg class="abs" style="left:773px;top:541.8px" width="12" height="3"><path d="M1 1.5 H11" stroke="#a3b5c1" stroke-width="1.4" stroke-dasharray="0.1 3" stroke-linecap="round"/></svg>
<div class="t" style="left:789px;top:537.2px;font-size:10.2px;font-weight:400;color:#616161;">13 Nov 2024–10 Feb 2025</div>
<div class="card" style="left:1350px;top:218px;width:546px;height:350px"></div>
<div class="t ttl" style="left:1365px;top:233.6px">Total sales breakdown</div>
<div style="position:absolute;left:1365px;top:258.0px;width:515px;height:33.5px;border-radius:8px;background:#f7f7f7"></div>
<div class="t" style="left:1375.5px;top:267.9px;font-size:12px;font-weight:400;color:#4b59a3;">Gross sales</div>
<div class="t" style="right:92.5px;top:267.6px;font-size:12.5px;font-weight:400;color:#303030;">$26,650.95</div>
<div class="t pct" style="left:1839.5px;top:269.3px;font-size:10.2px;color:#0d7a4c"><svg width="6" height="6" viewBox="0 0 10 10"><path d="M1.4 8.6 L6 4" stroke="currentColor" stroke-width="2.6" fill="none"/><path d="M2.4 0.6 H9.4 V7.6 Z" fill="currentColor"/></svg><span>9%</span></div>
<div style="position:absolute;left:1365px;top:295.4px;width:515px;height:33.5px;border-radius:8px;background:#f7f7f7"></div>
<div class="t" style="left:1375.5px;top:305.4px;font-size:12px;font-weight:400;color:#4b59a3;">Discounts</div>
<div class="t" style="right:92.5px;top:305.1px;font-size:12.5px;font-weight:400;color:#303030;">-$1,283.72</div>
<div class="t pct" style="left:1839.5px;top:306.7px;font-size:10.2px;color:#5c5c5c"><svg width="6" height="6" viewBox="0 0 10 10"><path d="M1.4 1.4 L6 6" stroke="currentColor" stroke-width="2.6" fill="none"/><path d="M9.4 2.4 V9.4 H2.4 Z" fill="currentColor"/></svg><span>1.9%</span></div>
<div style="position:absolute;left:1365px;top:332.9px;width:515px;height:33.5px;border-radius:8px;background:#f7f7f7"></div>
<div class="t" style="left:1375.5px;top:342.8px;font-size:12px;font-weight:400;color:#4b59a3;">Returns</div>
<div class="t" style="right:92.5px;top:342.5px;font-size:12.5px;font-weight:400;color:#303030;">-$659.80</div>
<div class="t pct" style="left:1839.5px;top:344.2px;font-size:10.2px;color:#0d7a4c"><svg width="6" height="6" viewBox="0 0 10 10"><path d="M1.4 1.4 L6 6" stroke="currentColor" stroke-width="2.6" fill="none"/><path d="M9.4 2.4 V9.4 H2.4 Z" fill="currentColor"/></svg><span>6%</span></div>
<div style="position:absolute;left:1365px;top:370.4px;width:515px;height:33.5px;border-radius:8px;background:#f7f7f7"></div>
<div class="t" style="left:1375.5px;top:380.3px;font-size:12px;font-weight:400;color:#4b59a3;">Net sales</div>
<div class="t" style="right:92.5px;top:380.0px;font-size:12.5px;font-weight:400;color:#303030;">$24,707.43</div>
<div class="t pct" style="left:1839.5px;top:381.6px;font-size:10.2px;color:#0d7a4c"><svg width="6" height="6" viewBox="0 0 10 10"><path d="M1.4 8.6 L6 4" stroke="currentColor" stroke-width="2.6" fill="none"/><path d="M2.4 0.6 H9.4 V7.6 Z" fill="currentColor"/></svg><span>10%</span></div>
<div style="position:absolute;left:1365px;top:407.8px;width:515px;height:33.5px;border-radius:8px;background:#f7f7f7"></div>
<div class="t" style="left:1375.5px;top:417.7px;font-size:12px;font-weight:400;color:#4b59a3;">Shipping charges</div>
<div class="t" style="right:92.5px;top:417.4px;font-size:12.5px;font-weight:400;color:#303030;">$1,214.69</div>
<div class="t pct" style="left:1839.5px;top:419.1px;font-size:10.2px;color:#5c5c5c"><svg width="6" height="6" viewBox="0 0 10 10"><path d="M1.4 1.4 L6 6" stroke="currentColor" stroke-width="2.6" fill="none"/><path d="M9.4 2.4 V9.4 H2.4 Z" fill="currentColor"/></svg><span>20%</span></div>
<div style="position:absolute;left:1365px;top:445.2px;width:515px;height:33.5px;border-radius:8px;background:#f7f7f7"></div>
<div class="t" style="left:1375.5px;top:455.2px;font-size:12px;font-weight:400;color:#4b59a3;">Return fees</div>
<div class="t" style="right:92.5px;top:454.9px;font-size:12.5px;font-weight:400;color:#303030;">$0.00</div>
<div style="position:absolute;left:1847px;top:461.4px;width:11px;height:1.3px;background:#8a8a8a"></div>
<div style="position:absolute;left:1365px;top:482.7px;width:515px;height:33.5px;border-radius:8px;background:#f7f7f7"></div>
<div class="t" style="left:1375.5px;top:492.6px;font-size:12px;font-weight:400;color:#4b59a3;">Taxes</div>
<div class="t" style="right:92.5px;top:492.3px;font-size:12.5px;font-weight:400;color:#303030;">$166.42</div>
<div class="t pct" style="left:1839.5px;top:494.0px;font-size:10.2px;color:#5c5c5c"><svg width="6" height="6" viewBox="0 0 10 10"><path d="M1.4 8.6 L6 4" stroke="currentColor" stroke-width="2.6" fill="none"/><path d="M2.4 0.6 H9.4 V7.6 Z" fill="currentColor"/></svg><span>8%</span></div>
<div style="position:absolute;left:1365px;top:520.2px;width:515px;height:33.5px;border-radius:8px;background:#f7f7f7"></div>
<div class="t" style="left:1375.5px;top:530.0px;font-size:12px;font-weight:400;color:#4b59a3;">Total sales</div>
<div class="t" style="right:92.5px;top:529.8px;font-size:12.5px;font-weight:400;color:#303030;">$26,088.54</div>
<div class="t pct" style="left:1839.5px;top:531.4px;font-size:10.2px;color:#0d7a4c"><svg width="6" height="6" viewBox="0 0 10 10"><path d="M1.4 8.6 L6 4" stroke="currentColor" stroke-width="2.6" fill="none"/><path d="M2.4 0.6 H9.4 V7.6 Z" fill="currentColor"/></svg><span>8%</span></div>
<div class="card" style="left:230px;top:582px;width:546px;height:229px"></div>
<div class="t ttl" style="left:245px;top:598.5px">Total sales by sales channel</div>
<svg class="abs" style="left:318px;top:629px" width="161" height="161" viewBox="0 0 161 161">
<circle cx="80.3" cy="80.4" r="70.9" fill="none" stroke="#3aa6e8" stroke-width="16.6"/>
<path d="M74 1.5 L79.5 1.5 L79.5 19 L74 19 Z" fill="#ffffff"/>
<path d="M75 1.6 L78.6 1.5 L79 17.6 L75.6 17.8 Z" fill="#6c2bd9"/>
<path d="M79.6 1 H81.4 V19 H79.6 Z" fill="#fff"/>
</svg>
<div class="t" style="left:318px;width:160px;text-align:center;top:691.5px;font-size:17.5px;font-weight:400;-webkit-text-stroke:0.45px #303030;color:#303030">$26.1T</div>
<div class="t pct" style="left:318px;width:160px;justify-content:center;top:714.6px;font-size:10px;color:#0d7a4c"><svg width="6" height="6" viewBox="0 0 10 10"><path d="M1.4 8.6 L6 4" stroke="currentColor" stroke-width="2.6" fill="none"/><path d="M2.4 0.6 H9.4 V7.6 Z" fill="currentColor"/></svg><span>8%</span></div>
<div style="position:absolute;left:505px;top:678.7px;width:11px;height:11px;border-radius:2px;background:#3aa6e8"></div>
<div class="t" style="left:518.3px;top:677.4px;font-size:11.4px;font-weight:400;color:#616161;">Online Store</div>
<div class="t" style="right:1262.5px;top:677.4px;font-size:11.4px;font-weight:400;color:#616161;">$25.8T</div>
<div class="t pct" style="left:660px;top:679.1px;font-size:10px;color:#0d7a4c"><svg width="6" height="6" viewBox="0 0 10 10"><path d="M1.4 8.6 L6 4" stroke="currentColor" stroke-width="2.6" fill="none"/><path d="M2.4 0.6 H9.4 V7.6 Z" fill="currentColor"/></svg><span>9%</span></div>
<div style="position:absolute;left:505px;top:703.8px;width:11px;height:11px;border-radius:2px;background:#6c2bd9"></div>
<div class="t" style="left:518.3px;top:702.5px;font-size:11.4px;font-weight:400;color:#616161;">Shop</div>
<div class="t" style="right:1262.5px;top:702.5px;font-size:11.4px;font-weight:400;color:#616161;">$325.23</div>
<div class="t pct" style="left:660px;top:704.2px;font-size:10px;color:#0d7a4c"><svg width="6" height="6" viewBox="0 0 10 10"><path d="M1.4 8.6 L6 4" stroke="currentColor" stroke-width="2.6" fill="none"/><path d="M2.4 0.6 H9.4 V7.6 Z" fill="currentColor"/></svg><span>10%</span></div>
<div style="position:absolute;left:505px;top:728.3px;width:11px;height:11px;border-radius:2px;background:#6b7ff0"></div>
<div class="t" style="left:518.3px;top:727.0px;font-size:11.4px;font-weight:400;color:#616161;">Draft Orders</div>
<div class="t" style="right:1262.5px;top:727.0px;font-size:11.4px;font-weight:400;color:#616161;">$0</div>
<div class="t pct" style="left:660px;top:729.5px;font-size:8.6px;color:#5c5c5c"><svg width="6" height="6" viewBox="0 0 10 10"><path d="M1.4 1.4 L6 6" stroke="currentColor" stroke-width="2.6" fill="none"/><path d="M9.4 2.4 V9.4 H2.4 Z" fill="currentColor"/></svg><span>100%</span></div>
<div class="card" style="left:790px;top:582px;width:546px;height:229px"></div>
<div class="t ttl" style="left:805px;top:598.5px">Average order value over time</div>
<svg class="abs" style="left:0;top:0" width="1919" height="945"><defs><linearGradient id="gf2" x1="0" y1="0" x2="0" y2="1"><stop offset="0" stop-color="#3b9fdc" stop-opacity="0.08"/><stop offset="1" stop-color="#3b9fdc" stop-opacity="0.0"/></linearGradient></defs><line x1="853.6" x2="1317.5" y1="663.2" y2="663.2" stroke="#ebebeb" stroke-width="1"/><line x1="853.6" x2="1317.5" y1="733.8" y2="733.8" stroke="#ebebeb" stroke-width="1"/><path d="M853.8,733.8 C853.8,733.8 856.4,713.2 858.1,713.1 C859.8,713.0 862.0,733.8 863.8,733.8 C865.4,733.8 865.5,719.9 868.1,717.5 C869.6,716.1 872.0,716.0 873.8,716.3 C875.6,716.6 876.8,719.0 878.8,719.4 C881.5,719.9 886.3,716.4 888.8,717.5 C891.2,718.5 892.0,722.4 893.8,725.0 C895.7,727.8 898.1,733.9 900.0,733.8 C901.8,733.7 903.3,727.8 905.0,725.0 C906.6,722.4 908.3,720.2 910.0,717.5 C911.9,714.4 914.1,707.2 915.7,707.5 C918.1,707.9 918.9,733.7 920.7,733.8 C922.0,733.9 922.9,723.5 925.0,720.0 C926.7,717.3 929.6,713.4 931.3,713.8 C933.6,714.4 934.1,725.3 936.3,728.8 C937.7,731.1 939.9,734.2 941.3,733.8 C943.5,733.2 944.0,718.1 946.3,717.5 C947.9,717.1 950.1,723.3 951.9,723.1 C953.9,722.9 955.7,714.4 957.6,714.4 C959.3,714.4 961.0,718.9 962.6,721.3 C964.3,723.9 966.0,729.5 967.6,729.4 C969.3,729.3 969.8,721.3 972.6,720.0 C976.0,718.4 983.0,723.3 987.6,723.1 C991.6,723.0 996.0,718.6 998.8,720.0 C1001.9,721.5 1002.2,733.4 1004.4,733.8 C1006.1,734.1 1008.4,730.0 1010.1,727.5 C1012.0,724.7 1013.3,717.7 1015.1,717.5 C1016.7,717.3 1018.6,724.0 1020.1,723.8 C1022.0,723.6 1023.3,712.7 1025.1,712.5 C1026.7,712.4 1028.5,717.0 1030.1,720.0 C1032.1,723.8 1033.5,733.4 1035.7,733.8 C1037.4,734.1 1039.7,730.2 1041.3,727.5 C1043.5,723.8 1044.4,713.3 1046.4,713.1 C1047.9,712.9 1049.8,720.7 1051.4,720.6 C1053.1,720.5 1054.7,711.3 1056.4,711.3 C1058.0,711.3 1059.4,718.0 1061.4,720.0 C1062.9,721.5 1064.8,723.3 1066.4,723.1 C1068.2,722.9 1069.5,719.0 1071.4,718.1 C1073.2,717.2 1075.8,716.9 1077.6,717.5 C1079.5,718.1 1081.0,722.0 1082.6,721.9 C1084.3,721.8 1085.9,716.2 1087.5,716.3 C1089.2,716.4 1090.4,722.0 1092.5,723.1 C1094.3,724.0 1096.9,722.5 1098.8,723.1 C1100.7,723.7 1102.0,726.5 1103.8,726.9 C1105.4,727.2 1107.1,725.6 1108.8,725.6 C1110.5,725.6 1112.1,727.0 1113.8,726.9 C1115.5,726.8 1117.1,725.1 1118.8,725.0 C1120.6,724.9 1122.9,727.2 1124.4,726.3 C1127.1,724.7 1127.4,709.6 1129.4,709.4 C1130.9,709.2 1132.9,718.3 1134.4,718.1 C1136.8,717.7 1138.3,692.4 1140.0,692.5 C1141.9,692.6 1142.8,725.4 1145.0,725.6 C1146.4,725.7 1148.2,711.4 1150.0,711.3 C1151.6,711.2 1153.0,719.8 1155.0,722.5 C1156.5,724.5 1158.3,727.1 1160.0,726.9 C1162.1,726.7 1164.3,718.8 1166.3,718.8 C1168.1,718.8 1169.9,725.4 1171.3,725.0 C1174.1,724.2 1174.6,692.5 1176.3,692.5 C1178.0,692.5 1177.5,720.5 1181.3,724.4 C1183.0,726.1 1185.3,724.8 1187.6,725.6 C1190.6,726.6 1195.1,731.6 1197.6,730.6 C1200.5,729.4 1200.6,716.6 1202.6,716.3 C1204.1,716.1 1205.8,722.7 1207.6,723.1 C1209.1,723.4 1211.0,719.9 1212.6,720.0 C1214.3,720.1 1216.1,724.8 1217.6,724.4 C1219.8,723.9 1221.4,710.6 1223.2,710.6 C1224.9,710.6 1225.4,719.7 1228.2,721.9 C1230.8,723.9 1236.0,724.4 1238.8,723.8 C1240.9,723.4 1242.3,720.3 1243.8,720.6 C1245.6,720.9 1247.3,727.7 1248.8,727.5 C1250.8,727.2 1252.1,713.9 1253.8,713.8 C1255.4,713.7 1256.3,723.6 1258.8,725.0 C1260.8,726.1 1264.4,725.2 1266.3,723.8 C1268.3,722.4 1268.4,718.1 1270.1,716.3 C1271.6,714.7 1273.8,713.0 1275.7,713.1 C1277.9,713.2 1281.0,715.9 1282.6,718.1 C1284.2,720.4 1283.6,724.3 1285.1,726.9 C1286.6,729.5 1289.3,734.0 1291.4,733.8 C1293.9,733.6 1296.2,725.8 1298.9,722.5 C1301.3,719.6 1304.3,714.6 1306.4,715.0 C1308.7,715.4 1310.1,726.7 1312.0,726.9 C1313.4,727.0 1316.4,720.6 1316.4,720.6 L1316.4,745 L853.8,745 Z" fill="url(#gf2)"/><path d="M853.8,715.0 C853.8,715.0 855.7,720.8 857.5,721.3 C859.4,721.9 863.1,716.8 865.0,717.5 C867.1,718.3 867.2,727.4 868.8,727.5 C871.0,727.6 875.2,708.8 877.5,708.8 C879.0,708.8 880.0,713.9 881.3,716.3 C882.5,718.5 883.8,722.6 885.0,722.5 C886.7,722.4 888.0,710.8 890.0,710.6 C892.1,710.4 895.6,722.3 897.5,722.5 C898.5,722.6 899.2,719.8 900.0,720.0 C901.3,720.3 901.7,728.3 903.8,728.8 C906.3,729.4 910.6,721.2 915.0,720.0 C920.0,718.7 928.3,724.5 932.5,722.5 C936.3,720.7 937.6,710.2 940.0,710.0 C941.7,709.9 942.6,714.1 945.0,716.3 C948.7,719.8 956.0,726.7 961.3,727.5 C965.6,728.2 969.9,723.9 973.8,723.8 C977.3,723.7 980.4,726.4 983.8,726.3 C987.4,726.2 991.5,722.8 995.0,722.5 C998.1,722.2 1000.8,723.8 1003.8,723.8 C1007.0,723.8 1010.4,722.4 1013.8,722.5 C1017.4,722.6 1021.2,724.1 1025.0,724.4 C1029.0,724.7 1032.9,724.0 1037.5,724.4 C1043.1,724.9 1051.5,729.0 1056.3,727.5 C1060.2,726.3 1062.0,718.9 1065.0,718.8 C1067.9,718.7 1071.0,726.1 1073.8,726.3 C1076.0,726.5 1078.0,722.2 1080.0,722.5 C1082.5,722.8 1084.8,730.2 1087.5,730.6 C1089.9,731.0 1092.4,727.9 1095.0,726.3 C1097.8,724.6 1100.7,721.1 1103.8,720.6 C1106.9,720.1 1111.2,724.0 1113.8,723.1 C1116.1,722.3 1116.5,717.4 1118.8,716.9 C1122.1,716.3 1128.4,724.1 1132.5,724.4 C1135.7,724.7 1138.2,721.1 1141.3,721.3 C1145.1,721.5 1150.6,728.2 1153.8,727.5 C1156.5,726.9 1157.7,720.3 1160.0,720.0 C1162.2,719.7 1164.7,723.5 1167.5,725.0 C1170.5,726.7 1174.1,729.9 1177.5,729.4 C1181.6,728.8 1186.2,718.9 1190.0,718.8 C1193.2,718.7 1195.4,724.6 1198.8,725.6 C1202.4,726.6 1207.2,725.5 1211.3,724.4 C1215.6,723.3 1219.6,718.4 1223.8,718.8 C1228.4,719.2 1232.7,728.4 1237.6,728.1 C1243.8,727.8 1252.0,710.7 1257.6,711.3 C1262.6,711.8 1266.4,727.4 1270.1,727.5 C1272.9,727.6 1275.9,718.4 1277.6,718.8 C1279.0,719.1 1279.0,726.8 1280.1,726.9 C1281.6,727.0 1284.4,712.4 1286.3,712.5 C1288.2,712.6 1288.3,725.4 1291.4,727.5 C1293.9,729.1 1298.0,727.6 1301.4,726.9 C1305.1,726.1 1312.6,722.5 1312.6,722.5" stroke="#a3b5c1" stroke-width="1.4" stroke-dasharray="0.1 3" stroke-linecap="round" fill="none"/><path d="M853.8,733.8 C853.8,733.8 856.4,713.2 858.1,713.1 C859.8,713.0 862.0,733.8 863.8,733.8 C865.4,733.8 865.5,719.9 868.1,717.5 C869.6,716.1 872.0,716.0 873.8,716.3 C875.6,716.6 876.8,719.0 878.8,719.4 C881.5,719.9 886.3,716.4 888.8,717.5 C891.2,718.5 892.0,722.4 893.8,725.0 C895.7,727.8 898.1,733.9 900.0,733.8 C901.8,733.7 903.3,727.8 905.0,725.0 C906.6,722.4 908.3,720.2 910.0,717.5 C911.9,714.4 914.1,707.2 915.7,707.5 C918.1,707.9 918.9,733.7 920.7,733.8 C922.0,733.9 922.9,723.5 925.0,720.0 C926.7,717.3 929.6,713.4 931.3,713.8 C933.6,714.4 934.1,725.3 936.3,728.8 C937.7,731.1 939.9,734.2 941.3,733.8 C943.5,733.2 944.0,718.1 946.3,717.5 C947.9,717.1 950.1,723.3 951.9,723.1 C953.9,722.9 955.7,714.4 957.6,714.4 C959.3,714.4 961.0,718.9 962.6,721.3 C964.3,723.9 966.0,729.5 967.6,729.4 C969.3,729.3 969.8,721.3 972.6,720.0 C976.0,718.4 983.0,723.3 987.6,723.1 C991.6,723.0 996.0,718.6 998.8,720.0 C1001.9,721.5 1002.2,733.4 1004.4,733.8 C1006.1,734.1 1008.4,730.0 1010.1,727.5 C1012.0,724.7 1013.3,717.7 1015.1,717.5 C1016.7,717.3 1018.6,724.0 1020.1,723.8 C1022.0,723.6 1023.3,712.7 1025.1,712.5 C1026.7,712.4 1028.5,717.0 1030.1,720.0 C1032.1,723.8 1033.5,733.4 1035.7,733.8 C1037.4,734.1 1039.7,730.2 1041.3,727.5 C1043.5,723.8 1044.4,713.3 1046.4,713.1 C1047.9,712.9 1049.8,720.7 1051.4,720.6 C1053.1,720.5 1054.7,711.3 1056.4,711.3 C1058.0,711.3 1059.4,718.0 1061.4,720.0 C1062.9,721.5 1064.8,723.3 1066.4,723.1 C1068.2,722.9 1069.5,719.0 1071.4,718.1 C1073.2,717.2 1075.8,716.9 1077.6,717.5 C1079.5,718.1 1081.0,722.0 1082.6,721.9 C1084.3,721.8 1085.9,716.2 1087.5,716.3 C1089.2,716.4 1090.4,722.0 1092.5,723.1 C1094.3,724.0 1096.9,722.5 1098.8,723.1 C1100.7,723.7 1102.0,726.5 1103.8,726.9 C1105.4,727.2 1107.1,725.6 1108.8,725.6 C1110.5,725.6 1112.1,727.0 1113.8,726.9 C1115.5,726.8 1117.1,725.1 1118.8,725.0 C1120.6,724.9 1122.9,727.2 1124.4,726.3 C1127.1,724.7 1127.4,709.6 1129.4,709.4 C1130.9,709.2 1132.9,718.3 1134.4,718.1 C1136.8,717.7 1138.3,692.4 1140.0,692.5 C1141.9,692.6 1142.8,725.4 1145.0,725.6 C1146.4,725.7 1148.2,711.4 1150.0,711.3 C1151.6,711.2 1153.0,719.8 1155.0,722.5 C1156.5,724.5 1158.3,727.1 1160.0,726.9 C1162.1,726.7 1164.3,718.8 1166.3,718.8 C1168.1,718.8 1169.9,725.4 1171.3,725.0 C1174.1,724.2 1174.6,692.5 1176.3,692.5 C1178.0,692.5 1177.5,720.5 1181.3,724.4 C1183.0,726.1 1185.3,724.8 1187.6,725.6 C1190.6,726.6 1195.1,731.6 1197.6,730.6 C1200.5,729.4 1200.6,716.6 1202.6,716.3 C1204.1,716.1 1205.8,722.7 1207.6,723.1 C1209.1,723.4 1211.0,719.9 1212.6,720.0 C1214.3,720.1 1216.1,724.8 1217.6,724.4 C1219.8,723.9 1221.4,710.6 1223.2,710.6 C1224.9,710.6 1225.4,719.7 1228.2,721.9 C1230.8,723.9 1236.0,724.4 1238.8,723.8 C1240.9,723.4 1242.3,720.3 1243.8,720.6 C1245.6,720.9 1247.3,727.7 1248.8,727.5 C1250.8,727.2 1252.1,713.9 1253.8,713.8 C1255.4,713.7 1256.3,723.6 1258.8,725.0 C1260.8,726.1 1264.4,725.2 1266.3,723.8 C1268.3,722.4 1268.4,718.1 1270.1,716.3 C1271.6,714.7 1273.8,713.0 1275.7,713.1 C1277.9,713.2 1281.0,715.9 1282.6,718.1 C1284.2,720.4 1283.6,724.3 1285.1,726.9 C1286.6,729.5 1289.3,734.0 1291.4,733.8 C1293.9,733.6 1296.2,725.8 1298.9,722.5 C1301.3,719.6 1304.3,714.6 1306.4,715.0 C1308.7,715.4 1310.1,726.7 1312.0,726.9 C1313.4,727.0 1316.4,720.6 1316.4,720.6" stroke="#4294c6" stroke-width="1.6" fill="none" stroke-linecap="round"/></svg>
<div class="t" style="left:805px;top:622.1px;font-size:18.6px;font-weight:400;color:#303030;letter-spacing:0.3px;-webkit-text-stroke:0.45px #303030">$98.35</div>
<div class="t pct" style="left:871px;top:628.0px;font-size:10.2px;color:#0d7a4c"><svg width="6" height="6" viewBox="0 0 10 10"><path d="M1.4 8.6 L6 4" stroke="currentColor" stroke-width="2.6" fill="none"/><path d="M2.4 0.6 H9.4 V7.6 Z" fill="currentColor"/></svg><span>17%</span></div>
<div class="t" style="left:806.9px;top:656.2px;font-size:10.6px;font-weight:400;color:#616161;">$500</div>
<div class="t" style="left:806.9px;top:726.8px;font-size:10.6px;font-weight:400;color:#616161;">$0</div>
<div class="t" style="left:813.6px;width:80px;text-align:center;top:746.3px;font-size:10.6px;color:#616161">11 Feb</div>
<div class="t" style="left:865.2px;width:80px;text-align:center;top:746.3px;font-size:10.6px;color:#616161">21 Feb</div>
<div class="t" style="left:917.2px;width:80px;text-align:center;top:746.3px;font-size:10.6px;color:#616161">3 Mar</div>
<div class="t" style="left:969.1px;width:80px;text-align:center;top:746.3px;font-size:10.6px;color:#616161">13 Mar</div>
<div class="t" style="left:1021.6px;width:80px;text-align:center;top:746.3px;font-size:10.6px;color:#616161">23 Mar</div>
<div class="t" style="left:1073.9px;width:80px;text-align:center;top:746.3px;font-size:10.6px;color:#616161">2 Apr</div>
<div class="t" style="left:1125.8px;width:80px;text-align:center;top:746.3px;font-size:10.6px;color:#616161">12 Apr</div>
<div class="t" style="left:1177.8px;width:80px;text-align:center;top:746.3px;font-size:10.6px;color:#616161">22 Apr</div>
<div class="t" style="left:1230.0px;width:80px;text-align:center;top:746.3px;font-size:10.6px;color:#616161">2 May</div>
<div style="position:absolute;left:929px;top:786.2px;width:11px;height:2px;border-radius:1px;background:#3d97cc"></div>
<div class="t" style="left:944px;top:781.1px;font-size:10.2px;font-weight:400;color:#616161;">11 Feb–11 May 2025</div>
<svg class="abs" style="left:1052px;top:785.7px" width="12" height="3"><path d="M1 1.5 H11" stroke="#a3b5c1" stroke-width="1.4" stroke-dasharray="0.1 3" stroke-linecap="round"/></svg>
<div class="t" style="left:1068px;top:781.1px;font-size:10.2px;font-weight:400;color:#616161;">13 Nov 2024–10 Feb 2025</div>
<div class="card" style="left:1350px;top:582px;width:546px;height:229px"></div>
<div class="t ttl" style="left:1365px;top:598.5px">Total sales by product</div>
<div class="t" style="left:1364.7px;top:626.8px;font-size:10.35px;font-weight:400;color:#616161;">Chatoyant Mineral Wash Plus Pants - More Colors · Chatoyant · Pants</div>
<div style="position:absolute;left:1364.7px;top:641px;width:350px;height:29px;border-radius:0 3px 3px 0;background:#3aa6e8"></div>
<div class="t" style="left:1724.2px;top:650.1px;font-size:10.6px;font-weight:400;color:#616161;">$3,003.65</div>
<div class="t pct" style="left:1782px;top:651.2px;font-size:10.2px;color:#0d7a4c"><svg width="6" height="6" viewBox="0 0 10 10"><path d="M1.4 8.6 L6 4" stroke="currentColor" stroke-width="2.6" fill="none"/><path d="M2.4 0.6 H9.4 V7.6 Z" fill="currentColor"/></svg><span>247%</span></div>
<div style="position:absolute;left:1364.7px;top:672.7px;width:100.5px;height:29px;border-radius:0 3px 3px 0;background:#90c8ea"></div>
<div class="t" style="left:1474.8px;top:681.0px;font-size:10.6px;font-weight:400;color:#616161;">$866.25</div>
<div class="t" style="left:1364.7px;top:721.6px;font-size:10.35px;font-weight:400;color:#616161;">Chatoyant Ankle Fringe Hem Pants - Many Colors · Debra's Passion Boutique · pants</div>
<div style="position:absolute;left:1364.7px;top:735.1px;width:259.5px;height:29.5px;border-radius:0 3px 3px 0;background:#3aa6e8"></div>
<div class="t" style="left:1633.5px;top:743.8px;font-size:10.6px;font-weight:400;color:#616161;">$2,229.60</div>
<div class="t pct" style="left:1691px;top:744.9px;font-size:10.2px;color:#0d7a4c"><svg width="6" height="6" viewBox="0 0 10 10"><path d="M1.4 8.6 L6 4" stroke="currentColor" stroke-width="2.6" fill="none"/><path d="M2.4 0.6 H9.4 V7.6 Z" fill="currentColor"/></svg><span>74%</span></div>
<div style="position:absolute;left:1364.7px;top:767.2px;width:148.7px;height:29.2px;border-radius:0 3px 3px 0;background:#90c8ea"></div>
<div class="t" style="left:1522.5px;top:775.8px;font-size:10.6px;font-weight:400;color:#616161;">$1,277.76</div>
<div class="card" style="left:230px;top:825px;width:546px;height:200px"></div>
<div class="t ttl" style="left:245px;top:841.4px">Sessions over time</div>
<div class="t" style="left:245.3px;top:865.5px;font-size:18px;font-weight:400;color:#303030;-webkit-text-stroke:0.45px #303030">40,317</div>
<div class="t pct" style="left:308.2px;top:871.2px;font-size:10.2px;color:#0d7a4c"><svg width="6" height="6" viewBox="0 0 10 10"><path d="M1.4 8.6 L6 4" stroke="currentColor" stroke-width="2.6" fill="none"/><path d="M2.4 0.6 H9.4 V7.6 Z" fill="currentColor"/></svg><span>104%</span></div>
<div class="t" style="left:247px;top:899.1px;font-size:10.6px;font-weight:400;color:#616161;">800</div>
<div class="t" style="left:247px;top:936.6px;font-size:10.6px;font-weight:400;color:#616161;">600</div>
<div class="card" style="left:790px;top:825px;width:546px;height:200px"></div>
<div class="t ttl" style="left:805px;top:841.4px">Conversion rate over time</div>
<div class="t" style="left:805px;top:865.7px;font-size:17.6px;font-weight:400;color:#303030;-webkit-text-stroke:0.45px #303030">0.61%</div>
<div class="t pct" style="left:862.3px;top:871.2px;font-size:10.2px;color:#5c5c5c"><svg width="6" height="6" viewBox="0 0 10 10"><path d="M1.4 1.4 L6 6" stroke="currentColor" stroke-width="2.6" fill="none"/><path d="M9.4 2.4 V9.4 H2.4 Z" fill="currentColor"/></svg><span>51%</span></div>
<div class="t" style="left:806.5px;top:899.1px;font-size:10.6px;font-weight:400;color:#616161;">4%</div>
<div class="t" style="left:806.5px;top:936.6px;font-size:10.6px;font-weight:400;color:#616161;">2%</div>
<div class="card" style="left:1350px;top:825px;width:546px;height:200px"></div>
<div class="t ttl" style="left:1365px;top:841.6px">Conversion rate breakdown</div>
<div class="t" style="left:1365px;top:865.7px;font-size:17.6px;font-weight:400;color:#303030;-webkit-text-stroke:0.45px #303030">0.61%</div>
<div class="t pct" style="left:1422.2px;top:871.2px;font-size:10.2px;color:#5c5c5c"><svg width="6" height="6" viewBox="0 0 10 10"><path d="M1.4 1.4 L6 6" stroke="currentColor" stroke-width="2.6" fill="none"/><path d="M9.4 2.4 V9.4 H2.4 Z" fill="currentColor"/></svg><span>51%</span></div>
<div style="position:absolute;left:1500.5px;top:901.5px;width:1px;height:41px;background:#e3e3e3"></div>
<div style="position:absolute;left:1637.6px;top:901.5px;width:1px;height:41px;background:#e3e3e3"></div>
<div style="position:absolute;left:1774.3px;top:901.5px;width:1px;height:41px;background:#e3e3e3"></div>
<div style="position:absolute;left:1365px;top:907.5px;width:13px;height:13px;border-radius:50%;background:#f1f1f1"></div>
<svg class="abs" style="left:1366px;top:908px" width="11" height="12" viewBox="0 0 11 12"><path d="M3 4.4 H8.2 M3 7.8 H8.2 M6 1.2 L5 10.8" stroke="#303030" stroke-width="1.2" fill="none"/></svg>
<div class="t" style="left:1382.4px;top:907.5px;font-size:11.4px;font-weight:400;color:#303030;">Sessions</div>
<div class="t" style="left:1365px;top:924.8px;font-size:12.6px;color:#303030"><b style="font-size:13px">100%</b> <span style="color:#616161;margin-left:3px">40,317</span></div>
<div class="t" style="left:1511px;top:907.5px;font-size:11.4px;font-weight:400;color:#303030;">Added to cart</div>
<div class="t" style="left:1511px;top:924.8px;font-size:12.6px;color:#303030"><b style="font-size:13px">2.58%</b> <span style="color:#616161;margin-left:3px">1,040</span></div>
<div class="t" style="left:1648px;top:907.5px;font-size:11.4px;font-weight:400;color:#303030;">Reached checkout</div>
<div class="t" style="left:1648px;top:924.8px;font-size:12.6px;color:#303030"><b style="font-size:13px">1.68%</b> <span style="color:#616161;margin-left:3px">679</span></div>
<div class="t" style="left:1784.7px;top:907.5px;font-size:11.4px;font-weight:400;color:#303030;">Completed che...</div>
<div class="t" style="left:1784.7px;top:924.8px;font-size:12.6px;color:#303030"><b style="font-size:13px">0.61%</b> <span style="color:#616161;margin-left:3px">247</span></div>
<svg class="abs" style="left:0;top:0" width="1919" height="945"><line x1="286.3" x2="757.5" y1="905.8" y2="905.8" stroke="#ebebeb"/><line x1="843.4" x2="1317.5" y1="905.8" y2="905.8" stroke="#ebebeb"/><path d="M390.5,948 C390.5,926 393,926 395,929 C397,931 399,933 400,948" stroke="#4a9fd0" stroke-width="1.5" fill="none"/><path d="M516.1,948 C516.7,928 522.5,928 523.3000000000001,948" stroke="#4a9fd0" stroke-width="1.5" fill="none"/><path d="M615.4,948 C616,934.5 621.8,934.5 622.6,948" stroke="#4a9fd0" stroke-width="1.5" fill="none"/><path d="M669.3,948 C669.9,934 675.6999999999999,934 676.5,948" stroke="#4a9fd0" stroke-width="1.5" fill="none"/><path d="M705.8,948 C706.4,926.4 712.1999999999999,926.4 713.0,948" stroke="#4a9fd0" stroke-width="1.5" fill="none"/><path d="M748.1,948 C748.7,924.3 754.5,924.3 755.3000000000001,948" stroke="#4a9fd0" stroke-width="1.5" fill="none"/><path d="M1103.6,946 L1103.8,906 C1104,903.5 1104.8,903.5 1105,906 L1105.6,946" stroke="#a3b5c1" stroke-width="1.4" stroke-dasharray="0.1 2.6" stroke-linecap="round" fill="none"/><path d="M1180,946 C1182,936 1184,936 1186,946" stroke="#a3b5c1" stroke-width="1.4" stroke-dasharray="0.1 2.6" stroke-linecap="round" fill="none"/></svg>
<div style="position:absolute;left:0;top:942px;width:1919px;height:1px;background:#a9b3c0"></div><div style="position:absolute;left:0;top:943px;width:1919px;height:2px;background:#e4ecf7"></div></body></html>
